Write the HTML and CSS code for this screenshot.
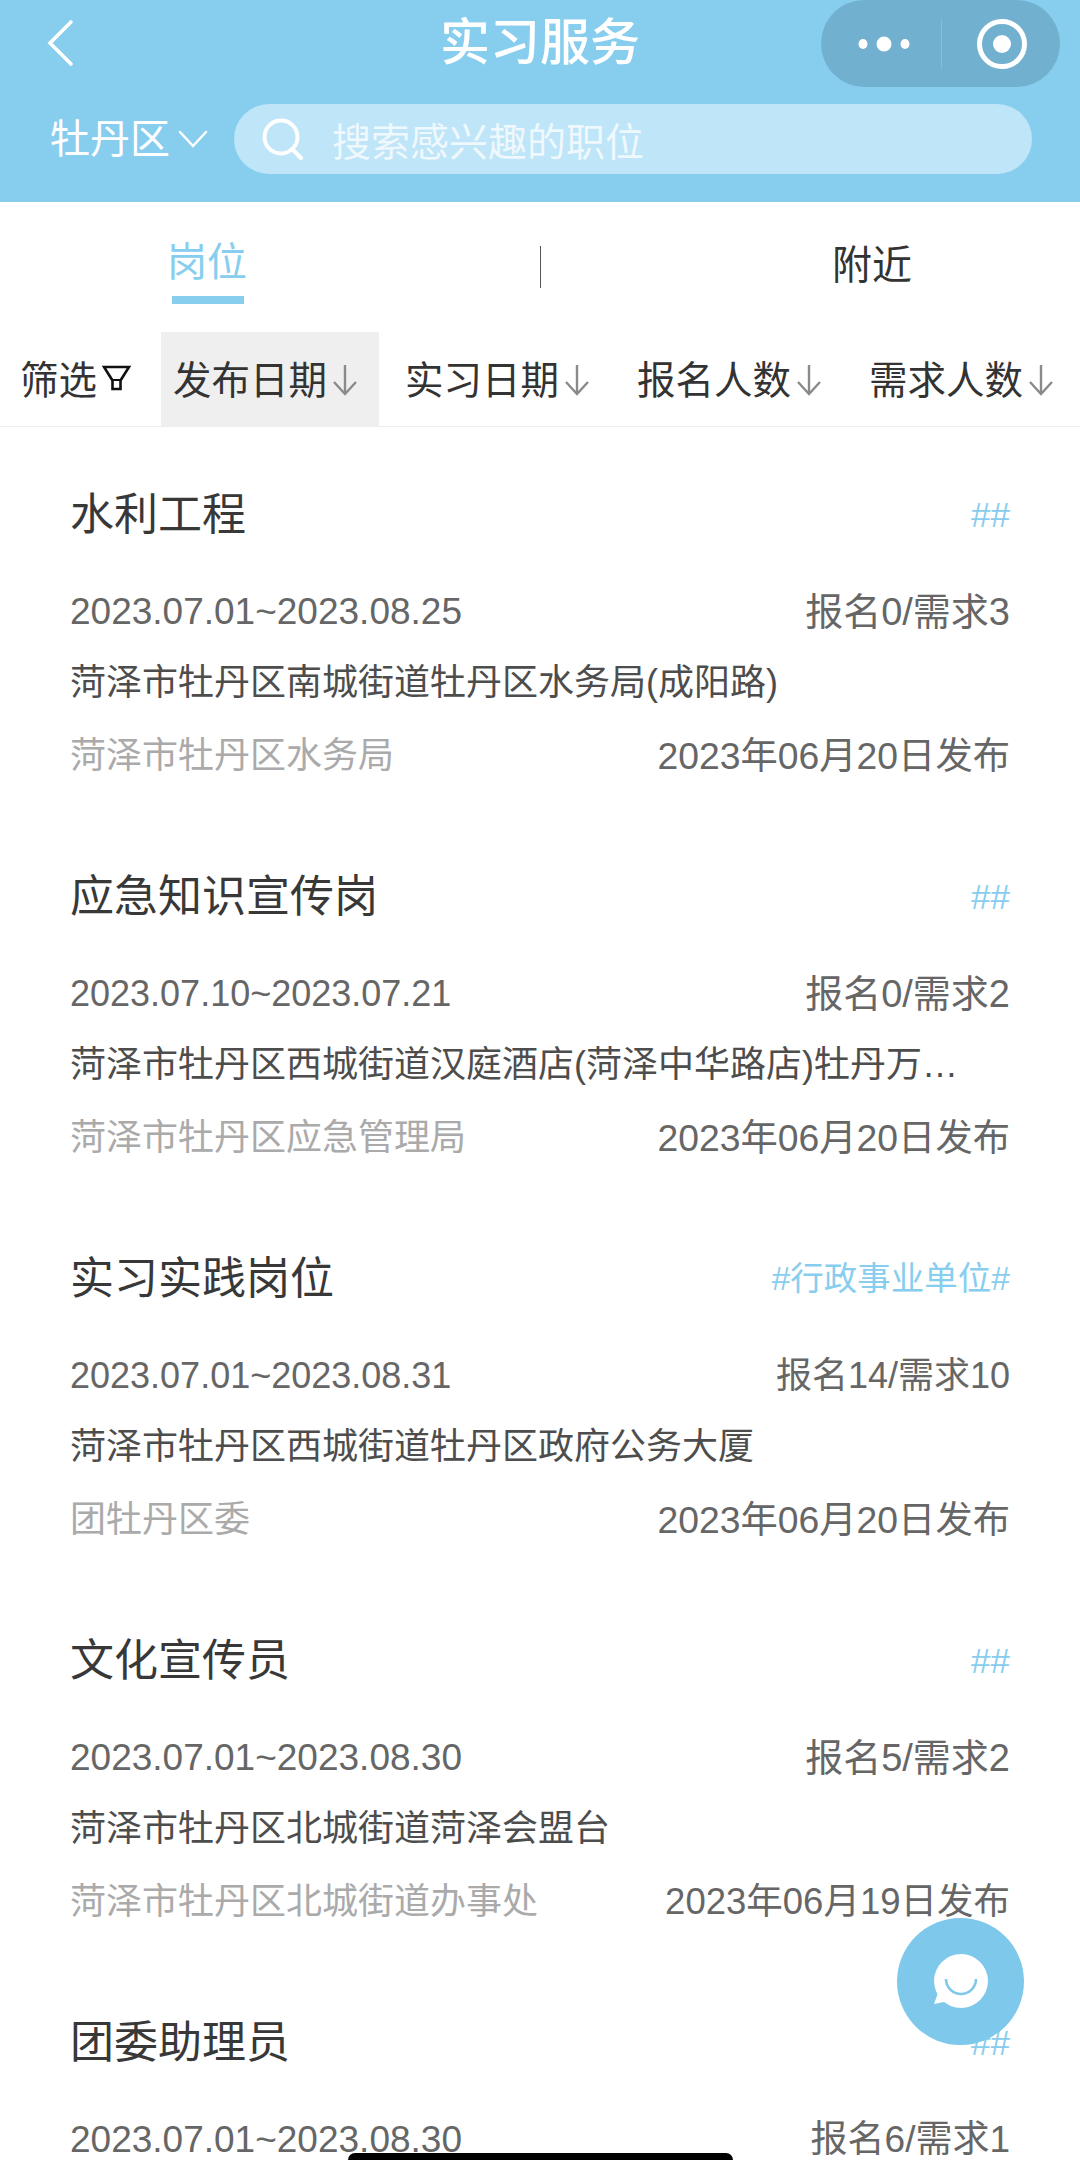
FILE: index.html
```html
<!DOCTYPE html>
<html lang="zh-CN">
<head>
<meta charset="utf-8">
<title>实习服务</title>
<link rel="stylesheet" href="styles.css">
</head>
<body>
<div class="page">
  <header class="header">
    <div class="nav">
      <svg class="back" viewBox="0 0 30 50" width="30" height="50"><path d="M26 4 5 25l21 21" fill="none" stroke="#fff" stroke-width="3.6" stroke-linecap="round"/></svg>
      <h1 class="title">实习服务</h1>
      <div class="capsule">
        <svg class="dots" viewBox="0 0 54 16" width="54" height="16"><ellipse cx="6" cy="8" rx="4.500" ry="5" fill="#fff"/><circle cx="27" cy="8" r="7.5" fill="#fff"/><ellipse cx="48" cy="8" rx="4.500" ry="5" fill="#fff"/></svg>
        <span class="cap-line"></span>
        <svg class="target" viewBox="0 0 52 52" width="52" height="52"><circle cx="26" cy="26" r="22.5" fill="none" stroke="#fff" stroke-width="5"/><circle cx="26" cy="26" r="9" fill="#fff"/></svg>
      </div>
    </div>
    <div class="search-row">
      <div class="area"><span>牡丹区</span><svg viewBox="0 0 30 18" width="30" height="18"><path d="M2 2l13 14L28 2" fill="none" stroke="#fff" stroke-width="2.5" stroke-linecap="round"/></svg></div>
      <div class="search">
        <svg viewBox="0 0 44 42" width="44" height="42"><circle cx="20" cy="19" r="16.5" fill="none" stroke="#fff" stroke-width="4"/><path d="M31 31l9 9" stroke="#fff" stroke-width="4" fill="none" stroke-linecap="round"/></svg>
        <span class="placeholder">搜索感兴趣的职位</span>
      </div>
    </div>
  </header>

  <nav class="tabs">
    <div class="tab tab-active"><span>岗位</span><i class="tab-bar"></i></div>
    <span class="tab-line"></span>
    <div class="tab tab-near">附近</div>
  </nav>

  <div class="sorts">
    <div class="filter"><span>筛选</span><svg viewBox="0 0 29 26" width="29" height="26"><path d="M2 2h25l-8.500 13.500V24h-8v-8.500z" fill="none" stroke="#111" stroke-width="2.6"/><path d="M10.500 15h8" stroke="#111" stroke-width="2"/></svg></div>
    <div class="sort sort-on"><span>发布日期</span><svg class="arrow" viewBox="0 0 26 32" width="26" height="32"><path d="M13 1v29M2 18l11 12 11-12" fill="none" stroke="#8a8a8a" stroke-width="2.4"/></svg></div>
    <div class="sort"><span>实习日期</span><svg class="arrow" viewBox="0 0 26 32" width="26" height="32"><path d="M13 1v29M2 18l11 12 11-12" fill="none" stroke="#8a8a8a" stroke-width="2.4"/></svg></div>
    <div class="sort"><span>报名人数</span><svg class="arrow" viewBox="0 0 26 32" width="26" height="32"><path d="M13 1v29M2 18l11 12 11-12" fill="none" stroke="#8a8a8a" stroke-width="2.4"/></svg></div>
    <div class="sort"><span>需求人数</span><svg class="arrow" viewBox="0 0 26 32" width="26" height="32"><path d="M13 1v29M2 18l11 12 11-12" fill="none" stroke="#8a8a8a" stroke-width="2.4"/></svg></div>
  </div>

  <main class="list">
    <article class="card">
      <div class="row r-title"><h2>水利工程</h2><span class="tag">##</span></div>
      <div class="row r-date"><span class="range">2023.07.01~2023.08.25</span><span class="count">报名0/需求3</span></div>
      <div class="addr">菏泽市牡丹区南城街道牡丹区水务局(成阳路)</div>
      <div class="row r-org"><span class="org">菏泽市牡丹区水务局</span><span class="pub">2023年06月20日发布</span></div>
    </article>
    <article class="card">
      <div class="row r-title"><h2>应急知识宣传岗</h2><span class="tag">##</span></div>
      <div class="row r-date"><span class="range range-narrow">2023.07.10~2023.07.21</span><span class="count">报名0/需求2</span></div>
      <div class="addr">菏泽市牡丹区西城街道汉庭酒店(菏泽中华路店)牡丹万达广场对面</div>
      <div class="row r-org"><span class="org">菏泽市牡丹区应急管理局</span><span class="pub">2023年06月20日发布</span></div>
    </article>
    <article class="card">
      <div class="row r-title"><h2>实习实践岗位</h2><span class="tag tag-long">#行政事业单位#</span></div>
      <div class="row r-date"><span class="range range-narrow">2023.07.01~2023.08.31</span><span class="count count-narrow">报名14/需求10</span></div>
      <div class="addr">菏泽市牡丹区西城街道牡丹区政府公务大厦</div>
      <div class="row r-org"><span class="org">团牡丹区委</span><span class="pub">2023年06月20日发布</span></div>
    </article>
    <article class="card">
      <div class="row r-title"><h2>文化宣传员</h2><span class="tag">##</span></div>
      <div class="row r-date"><span class="range">2023.07.01~2023.08.30</span><span class="count">报名5/需求2</span></div>
      <div class="addr">菏泽市牡丹区北城街道菏泽会盟台</div>
      <div class="row r-org"><span class="org">菏泽市牡丹区北城街道办事处</span><span class="pub pub-narrow">2023年06月19日发布</span></div>
    </article>
    <article class="card">
      <div class="row r-title"><h2>团委助理员</h2><span class="tag">##</span></div>
      <div class="row r-date"><span class="range">2023.07.01~2023.08.30</span><span class="count count-mid">报名6/需求1</span></div>
    </article>
  </main>

  <div class="fab">
    <svg viewBox="0 0 60 60" width="60" height="60"><circle cx="30" cy="29" r="27" fill="#fff"/><path d="M8 38 3 52l15-3z" fill="#fff"/><path d="M15 27a15 15 0 0 0 30 0" fill="none" stroke="#7ec8ec" stroke-width="2.6"/></svg>
  </div>
  <div class="home-bar"></div>
</div>
</body>
</html>
```

FILE: styles.css
```css
* { box-sizing: border-box; }
html, body { margin: 0; padding: 0; background: #fff; }
body { font-family: "Liberation Sans", "Noto Sans CJK SC", sans-serif; color: #333; }
.page { position: relative; width: 1080px; height: 2160px; overflow: hidden; background: #fff; }

.header { height: 202px; background: #87ceee; display: flex; flex-direction: column; }
.nav { position: relative; height: 87px; display: flex; align-items: center; justify-content: center; flex: none; }
.back { position: absolute; left: 45px; top: 18px; }
.title { margin: 0; font-size: 50px; line-height: 87px; font-weight: 500; color: #fff; }
.capsule { position: absolute; right: 20px; top: 0; width: 239px; height: 87px; border-radius: 44px; background: #72b0d0; display: flex; align-items: center; padding-left: 36px; }
.cap-line { width: 1px; height: 50px; background: #84bedb; margin-left: 30px; }
.target { margin-left: 34px; }

.search-row { display: flex; align-items: center; height: 70px; margin-top: 17px; padding-left: 50px; }
.area { display: flex; align-items: center; width: 184px; font-size: 40px; line-height: 70px; color: #fff; gap: 8px; }
.search { width: 798px; height: 70px; border-radius: 35px; background: #bee5f8; display: flex; align-items: center; padding-left: 27px; gap: 27px; }
.placeholder { font-size: 39px; color: #fff; opacity: .75; }

.tabs { position: relative; height: 130px; display: flex; }
.tab { font-size: 40px; line-height: 50px; }
.tab-active { width: 540px; padding: 35px 0 0 167px; color: #87ceee; }
.tab-active span { display: block; }
.tab-bar { display: block; width: 72px; height: 8px; margin: 9px 0 0 5px; background: #87ceee; }
.tab-line { width: 1px; height: 42px; margin-top: 44px; background: #555; }
.tab-near { padding: 38px 0 0 291px; color: #333; }

.sorts { height: 95px; display: flex; align-items: stretch; border-bottom: 1px solid #eee; font-size: 38.500px; color: #333; }
.filter { width: 161px; flex: none; padding: 0 0 5px 20px; display: flex; align-items: center; gap: 5px; }
.filter svg { margin-top: 3px; }
.sort { width: 218px; flex: none; padding: 0 0 5px 12px; display: flex; align-items: center; margin-right: 14px; white-space: nowrap; }
.sort-on { background: #efefef; }
.arrow { margin: 6px 0 0 5px; flex: none; }

.list { display: flex; flex-direction: column; }
.card { height: 382px; padding: 61px 70px 0; flex: none; }
.row { display: flex; justify-content: space-between; align-items: center; }
.r-title { height: 54px; }
.r-title h2 { margin: 0; font-size: 44px; font-weight: 400; line-height: 54px; color: #383838; }
.tag { font-size: 35px; line-height: 50px; color: #87ceee; }
.tag-long { font-size: 33.500px; }
.r-date { height: 50px; margin-top: 45px; color: #666; line-height: 50px; }
.range { font-size: 37px; }
.range-narrow { font-size: 36px; }
.count { font-size: 38px; }
.count-narrow { font-size: 36px; }
.count-mid { font-size: 37px; }
.addr { height: 50px; margin-top: 21px; width: 900px; font-size: 36px; line-height: 50px; color: #4d4d4d; white-space: nowrap; overflow: hidden; text-overflow: ellipsis; }
.r-org { height: 50px; margin-top: 23px; color: #666; line-height: 50px; }
.org { font-size: 36px; color: #aaa; }
.pub { font-size: 37.300px; }
.pub-narrow { font-size: 36.500px; }

.fab { position: absolute; left: 897px; top: 1918px; width: 127px; height: 127px; border-radius: 50%; background: #7ec8ec; display: flex; align-items: center; justify-content: center; }
.home-bar { position: absolute; left: 348px; top: 2153px; width: 385px; height: 7px; background: #000; border-radius: 7px 7px 0 0; }
```
